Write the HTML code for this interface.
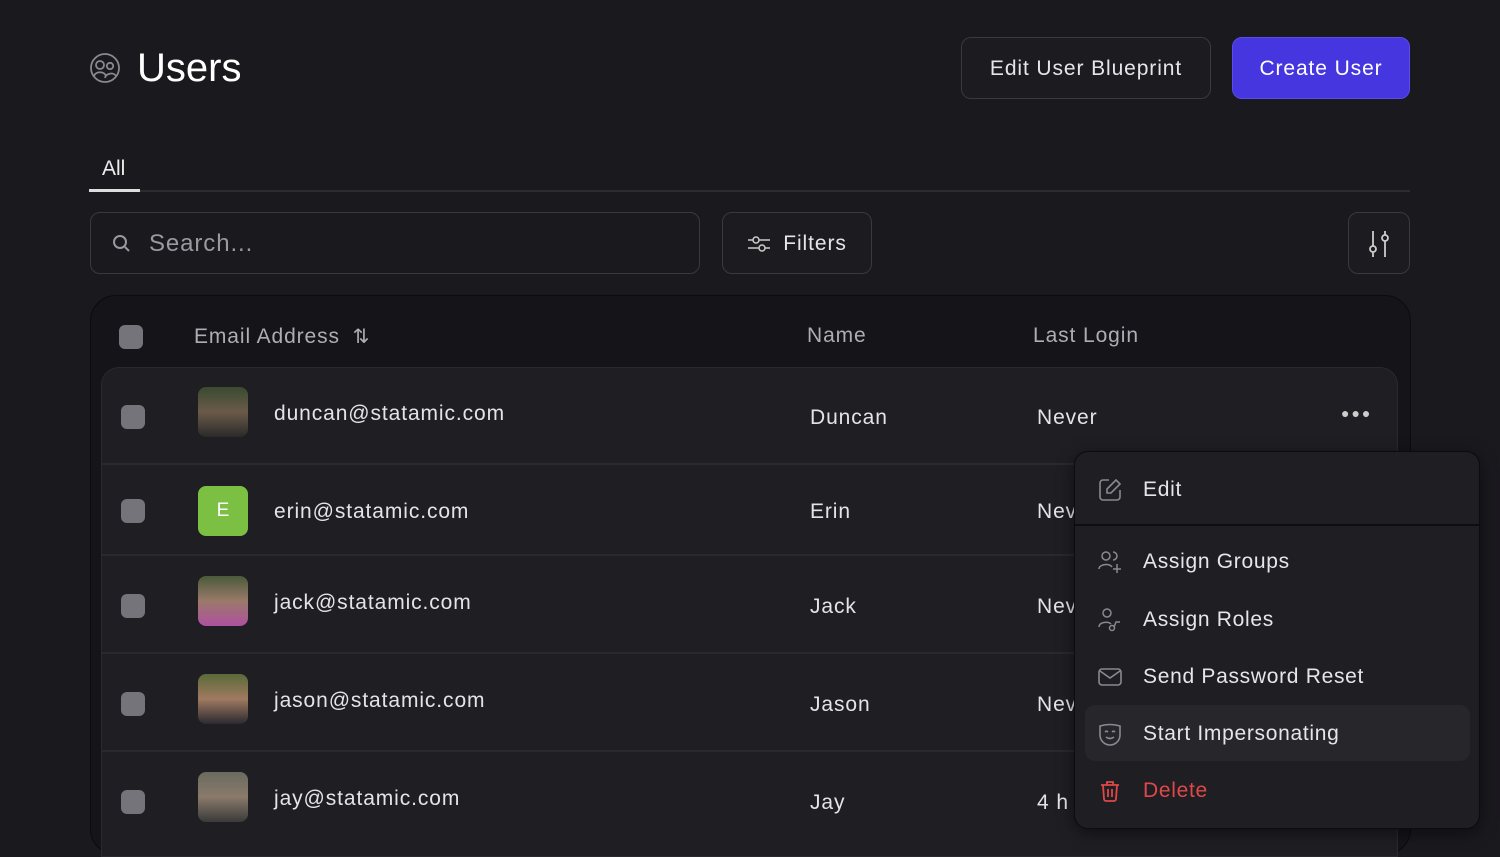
<!DOCTYPE html>
<html><head><meta charset="utf-8"><style>
*{box-sizing:border-box;margin:0;padding:0}
body{width:1500px;height:844px;overflow:hidden;background:#1a191e;font-family:"Liberation Sans",sans-serif;color:#e8e8ea;position:relative}
.a{position:absolute}
.btn{position:absolute;border:1px solid #3a393f;border-radius:10px;background:#1c1b20;display:flex;align-items:center;justify-content:center;font-size:21px;color:#e6e6e8;letter-spacing:0.9px;padding-top:2px}
.cb{position:absolute;width:24px;height:24px;border-radius:6px;background:#75747b}
.av{position:absolute;left:198px;width:50px;height:50px;border-radius:8px;overflow:hidden}
.t{position:absolute;font-size:21px;color:#e4e4e6;white-space:nowrap;letter-spacing:0.9px;margin-top:2px}
.sep{position:absolute;left:101px;width:1297px;height:2px;background:#2a292e}
.mi{position:absolute;left:1085px;width:385px;height:56px;display:flex;align-items:center;font-size:21px;color:#e6e6e8;letter-spacing:0.7px;padding-top:2px}
.mi svg{margin-left:12px;margin-right:20px}
</style></head><body>
<svg class="a" style="left:89px;top:52px" width="32" height="32" viewBox="0 0 32 32" fill="none" stroke="#8a898f" stroke-width="1.8"><circle cx="16" cy="16" r="14"/><circle cx="11" cy="13" r="4"/><circle cx="21" cy="14" r="3.2"/><path d="M5 24c2-5 10-5 12 0M16 26c1-5 9-6 11-2"/></svg>
<div class="a" style="left:137px;top:46px;font-size:40px;color:#fff">Users</div>
<div class="btn" style="left:961px;top:37px;width:250px;height:62px">Edit User Blueprint</div>
<div class="btn" style="left:1232px;top:37px;width:178px;height:62px;background:#4636e0;border-color:#5a4cf0;color:#fff">Create User</div>
<div class="a" style="left:102px;top:157px;font-size:21px;color:#eee">All</div>
<div class="a" style="left:89px;top:190px;width:1321px;height:2px;background:#2c2b30"></div>
<div class="a" style="left:89px;top:189px;width:51px;height:3px;background:#ddd"></div>
<div class="btn" style="left:90px;top:212px;width:610px;height:62px;justify-content:flex-start;color:#9a999f;font-size:24px;background:#1a191e">
<svg style="margin:0 16px 0 20px" width="22" height="22" viewBox="0 0 22 22" fill="none" stroke="#9a999f" stroke-width="2"><circle cx="9" cy="9" r="6"/><path d="M14 14l4 4"/></svg>Search...</div>
<div class="btn" style="left:722px;top:212px;width:150px;height:62px">
<svg style="margin-right:12px" width="24" height="20" viewBox="0 0 24 20" fill="none" stroke="#ccc" stroke-width="1.5"><path d="M1 6h5M12 6h11M1 14h11M18 14h5"/><circle cx="9" cy="6" r="3"/><circle cx="15" cy="14" r="3"/></svg>Filters</div>
<div class="btn" style="left:1348px;top:212px;width:62px;height:62px">
<svg width="28" height="32" viewBox="0 0 28 32" fill="none" stroke="#ccc" stroke-width="1.8"><path d="M8 3v15M8 24v5M20 3v4M20 13v16"/><circle cx="8" cy="21" r="3"/><circle cx="20" cy="10" r="3"/></svg></div>
<div class="a" style="left:90px;top:295px;width:1321px;height:560px;border-radius:26px;background:#151418;border:1px solid #0c0b0e"></div>
<div class="cb" style="left:119px;top:325px"></div>
<div class="t" style="left:194px;top:322px;color:#aeadb3">Email Address <span style="font-size:20px;margin-left:6px">⇅</span></div>
<div class="t" style="left:807px;top:322px;color:#aeadb3">Name</div>
<div class="t" style="left:1033px;top:322px;color:#aeadb3">Last Login</div>
<div class="a" style="left:101px;top:367px;width:1297px;height:490px;border-radius:18px 18px 0 0;background:#1f1e23;border:1px solid #2a292e"></div>
<div class="sep" style="top:463px"></div><div class="sep" style="top:554px"></div><div class="sep" style="top:652px"></div><div class="sep" style="top:750px"></div>

<div class="cb" style="left:121px;top:405px"></div>
<div class="av" style="top:387px;background:linear-gradient(#3a4a30,#6b5a4a 50%,#2a2a2a)"></div>
<div class="t" style="left:274px;top:400px">duncan@statamic.com</div>
<div class="t" style="left:810px;top:404px">Duncan</div>
<div class="t" style="left:1037px;top:404px">Never</div>
<div class="t" style="left:1341px;top:403px;font-size:14px;letter-spacing:2px;color:#ccc">●●●</div>

<div class="cb" style="left:121px;top:499px"></div>
<div class="av" style="top:486px;background:#7bc043;color:#fff;font-size:19px;display:flex;align-items:center;justify-content:center">E</div>
<div class="t" style="left:274px;top:498px">erin@statamic.com</div>
<div class="t" style="left:810px;top:498px">Erin</div>
<div class="t" style="left:1037px;top:498px">Nev</div>

<div class="cb" style="left:121px;top:594px"></div>
<div class="av" style="top:576px;background:linear-gradient(#4a5a3a,#9a7a6a 50%,#b050a0)"></div>
<div class="t" style="left:274px;top:589px">jack@statamic.com</div>
<div class="t" style="left:810px;top:593px">Jack</div>
<div class="t" style="left:1037px;top:593px">Nev</div>

<div class="cb" style="left:121px;top:692px"></div>
<div class="av" style="top:674px;background:linear-gradient(#5a6a3a,#a07a60 50%,#2a2a30)"></div>
<div class="t" style="left:274px;top:687px">jason@statamic.com</div>
<div class="t" style="left:810px;top:691px">Jason</div>
<div class="t" style="left:1037px;top:691px">Nev</div>

<div class="cb" style="left:121px;top:790px"></div>
<div class="av" style="top:772px;background:linear-gradient(#6a6a60,#8a7a6a 50%,#3a3a3a)"></div>
<div class="t" style="left:274px;top:785px">jay@statamic.com</div>
<div class="t" style="left:810px;top:789px">Jay</div>
<div class="t" style="left:1037px;top:789px">4 h</div>

<div class="a" style="left:1074px;top:451px;width:406px;height:378px;border-radius:14px;background:#1f1e23;border:1px solid #0c0b0e;box-shadow:0 4px 16px rgba(0,0,0,.5)"></div>
<div class="a" style="left:1075px;top:524px;width:404px;height:2px;background:#0e0d10"></div>
<div class="a" style="left:1085px;top:705px;width:385px;height:56px;border-radius:10px;background:#27262b"></div>
<div class="mi" style="top:461px"><svg width="26" height="26" viewBox="0 0 26 26" fill="none" stroke="#8a898f" stroke-width="1.6"><path d="M12 3H6a3 3 0 00-3 3v14a3 3 0 003 3h14a3 3 0 003-3v-7"/><path d="M19 3l4 4-9 9h-4v-4z"/></svg>Edit</div>
<div class="mi" style="top:533px"><svg width="26" height="26" viewBox="0 0 26 26" fill="none" stroke="#8a898f" stroke-width="1.5"><circle cx="9" cy="7" r="4"/><path d="M16 3a4 4 0 010 8M2 20c0-5 11-6 13-2M20 15v9M16 20h8"/></svg>Assign Groups</div>
<div class="mi" style="top:591px"><svg width="26" height="26" viewBox="0 0 26 26" fill="none" stroke="#8a898f" stroke-width="1.5"><circle cx="10" cy="6" r="4"/><path d="M2 20c0-5 9-6 12-3"/><circle cx="15" cy="21" r="2.5"/><path d="M17 20l2-5h4"/></svg>Assign Roles</div>
<div class="mi" style="top:648px"><svg width="26" height="26" viewBox="0 0 26 26" fill="none" stroke="#8a898f" stroke-width="1.6"><rect x="2" y="5" width="22" height="16" rx="3"/><path d="M3 7l10 7 10-7"/></svg>Send Password Reset</div>
<div class="mi" style="top:705px"><svg width="26" height="26" viewBox="0 0 26 26" fill="none" stroke="#8a898f" stroke-width="1.6"><path d="M3 5q10-3 20 0v9a10 10 0 01-20 0z"/><path d="M8 11q1.5-1.5 3 0M15 11q1.5-1.5 3 0M9 16q4 3 8 0"/></svg>Start Impersonating</div>
<div class="mi" style="top:762px;color:#e04848"><svg width="26" height="26" viewBox="0 0 26 26" fill="none" stroke="#e04848" stroke-width="1.8"><path d="M4 7h18M10 7V4h6v3M6 7l1 14a2 2 0 002 2h8a2 2 0 002-2l1-14M11 11v8M15 11v8"/></svg>Delete</div>
</body></html>
